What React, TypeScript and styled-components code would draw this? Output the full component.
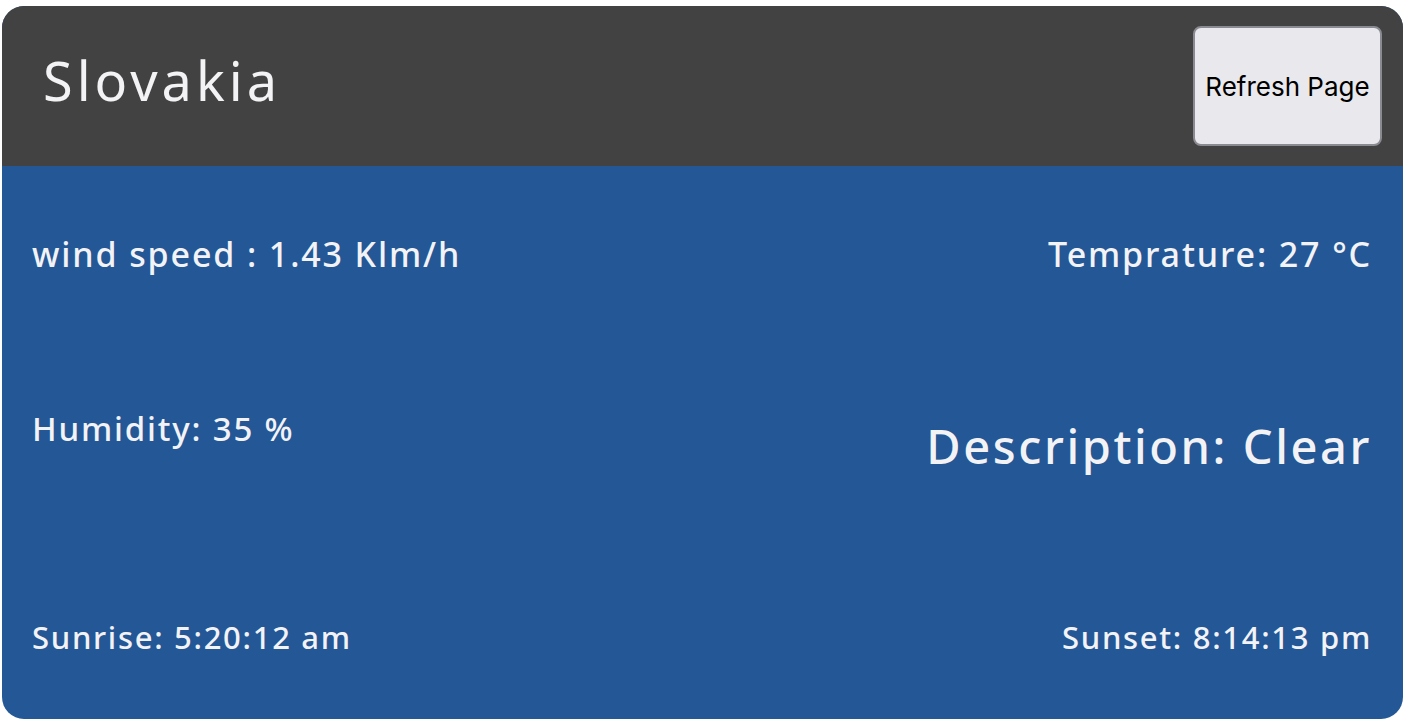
import styled, { createGlobalStyle } from "styled-components";

interface IStat {
    $size: number;
    $lift?: number;
}

const weather = {
    city: "Slovakia",
    wind: "1.43",
    temp: "27",
    humidity: "35",
    description: "Clear",
    sunrise: "5:20:12 am",
    sunset: "8:14:13 pm",
};

const GlobalStyle = createGlobalStyle`
    html, body {
        margin: 0;
        padding: 0;
        background: #fff;
    }
`;

export default function App() {
    return (
        <>
            <GlobalStyle />
            <Card>
                <Header>
                    <Title>{weather.city}</Title>
                    <RefreshButton onClick={() => window.location.reload()}>Refresh Page</RefreshButton>
                </Header>
                <Body>
                    <Row>
                        <Stat $size={34}>wind speed : {weather.wind} Klm/h</Stat>
                        <Stat $size={34}>Temprature: {weather.temp} °C</Stat>
                    </Row>
                    <Row>
                        <Stat $size={33} $lift={36}>Humidity: {weather.humidity} %</Stat>
                        <Stat $size={47}>Description: {weather.description}</Stat>
                    </Row>
                    <Row>
                        <Stat $size={31}>Sunrise: {weather.sunrise}</Stat>
                        <Stat $size={31}>Sunset: {weather.sunset}</Stat>
                    </Row>
                </Body>
            </Card>
        </>
    );
}

const Card = styled.div`
    margin: 6px 4px 6px 2px;
    height: 713px;
    display: flex;
    flex-direction: column;
    background-color: #235796;
    border-radius: 22px;
    overflow: hidden;
    font-family: "Noto Sans", "DejaVu Sans", sans-serif;
    color: #f3f3f6;
`;

const Header = styled.div`
    height: 160px;
    box-sizing: border-box;
    display: flex;
    align-items: center;
    justify-content: space-between;
    padding: 0 21px 0 41px;
    background-color: #424242;
`;

const Title = styled.h1`
    margin: 0 0 12px 0;
    font-size: 54px;
    font-weight: 400;
    letter-spacing: 4px;
    line-height: 1;
`;

const RefreshButton = styled.button`
    width: 189px;
    height: 120px;
    background-color: #e9e8ed;
    border: 2px solid #8a8a91;
    border-radius: 8px;
    color: #000;
    font-family: Inter, "Liberation Sans", sans-serif;
    font-size: 26px;
    padding: 0;
    cursor: pointer;
`;

const Body = styled.div`
    flex: 1;
    display: flex;
    flex-direction: column;
    justify-content: space-between;
    padding: 68px 31px 63px 30px;
`;

const Row = styled.div`
    display: flex;
    align-items: center;
    justify-content: space-between;
`;

const Stat = styled.span<IStat>`
    font-size: ${props => props.$size}px;
    line-height: ${props => Math.round(props.$size * 1.18)}px;
    font-weight: 500;
    letter-spacing: 0.055em;
    margin-bottom: ${props => props.$lift ?? 0}px;
`;
